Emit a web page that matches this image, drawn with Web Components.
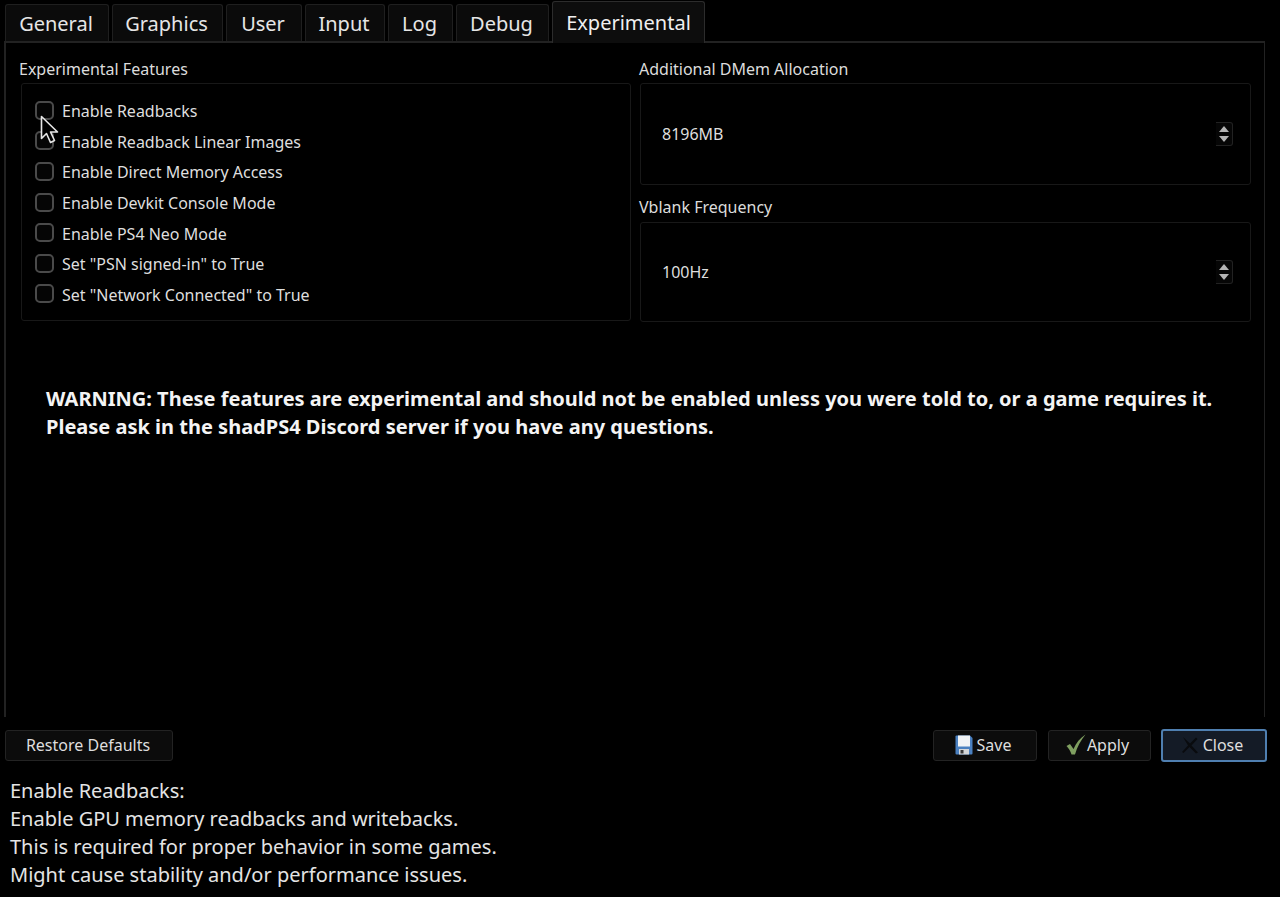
<!DOCTYPE html>
<html>
<head>
<meta charset="utf-8">
<style>
    html, body {
        margin: 0;
        height: 897px;
        overflow: hidden;
        background: #000;
    }
</style>
</head>
<body>
<settings-dialog>
    <tab-bar slot="tabs">
        <tab-item style="--w: 107px">General</tab-item>
        <tab-item style="--w: 114px">Graphics</tab-item>
        <tab-item style="--w: 79px">User</tab-item>
        <tab-item style="--w: 83px">Input</tab-item>
        <tab-item style="--w: 68px">Log</tab-item>
        <tab-item style="--w: 96px">Debug</tab-item>
        <tab-item active style="--w: 153px">Experimental</tab-item>
    </tab-bar>

    <group-box slot="left" title="Experimental Features" style="--inset: 2px">
        <check-list>
            <check-row>Enable Readbacks</check-row>
            <check-row>Enable Readback Linear Images</check-row>
            <check-row>Enable Direct Memory Access</check-row>
            <check-row>Enable Devkit Console Mode</check-row>
            <check-row>Enable PS4 Neo Mode</check-row>
            <check-row>Set "PSN signed-in" to True</check-row>
            <check-row>Set "Network Connected" to True</check-row>
        </check-list>
    </group-box>

    <group-box slot="right" title="Additional DMem Allocation" style="--inset: 1px">
        <spin-box style="--h: 100px">8196MB</spin-box>
    </group-box>
    <group-box slot="right" title="Vblank Frequency" style="--inset: 1px; --gap: 4px">
        <spin-box style="--h: 98px">100Hz</spin-box>
    </group-box>

    <span slot="warning">WARNING: These features are experimental and should not be enabled unless you were told to, or a game requires it.<br>Please ask in the shadPS4 Discord server if you have any questions.</span>

    <push-button slot="restore" style="--w: 168px; --pr: 2px">Restore Defaults</push-button>
    <push-button slot="actions" style="--w: 104px; --pr: 4px; margin-right: 1px">
        <svg slot="icon" width="18" height="20" viewBox="0 0 18 20">
            <path d="M0.5 1.5Q0.5 0.5 1.5 0.5H15L17.5 3V18.5Q17.5 19.5 16.5 19.5H1.5Q0.5 19.5 0.5 18.5z" fill="#4a80c0"/>
            <rect x="3" y="0.5" width="12" height="11" fill="#f0f3f6"/>
            <rect x="4" y="14" width="10" height="5.5" fill="#d4d6d8"/>
            <rect x="5.5" y="15" width="3" height="3.5" fill="#3a3a3a"/>
        </svg>
        Save
    </push-button>
    <push-button slot="actions" style="--w: 103px; --pr: 4px; --ig: -3px">
        <svg slot="icon" width="20" height="21" viewBox="0 0 20 21">
            <path d="M0.5 12L4 10L7.5 15C10 9 14 4 19.5 0.5C15 6 11 13 9 20.5H5.5C4.5 17 2.5 14 0.5 12z" fill="#7f9f60"/>
        </svg>
        Apply
    </push-button>
    <push-button slot="actions" focused style="--w: 106px; --pr: 4px">
        <svg slot="icon" width="18" height="18" viewBox="0 0 18 18">
            <path d="M2 1L9 7.5L15 1.5L16.5 3L10.5 9.5L17 16.5L15 17.5L8.5 11L2.5 17L1 16L7 9.5z" fill="#090b0e"/>
        </svg>
        Close
    </push-button>

    <span slot="help">Enable Readbacks:<br>Enable GPU memory readbacks and writebacks.<br>This is required for proper behavior in some games.<br>Might cause stability and/or performance issues.</span>
</settings-dialog>

<script>
const FONT = `"Noto Sans", "Open Sans", sans-serif`

customElements.define(
    'settings-dialog',
    class extends HTMLElement {
        constructor() {
            super()

            const shadow = this.attachShadow({ mode: 'open' })

            shadow.innerHTML = `
                <style>
                    :host {
                        display: flex;
                        flex-direction: column;
                        height: 897px;
                        box-sizing: border-box;
                        font-family: ${FONT};
                        color: #e8e8e8;
                        position: relative;
                    }
                    .tabs {
                        height: 41px;
                        padding-left: 5px;
                        display: flex;
                        position: relative;
                        z-index: 1;
                    }
                    .pane {
                        height: 676px;
                        box-sizing: border-box;
                        margin-left: 4px;
                        width: 1261px;
                        border: solid #222;
                        border-width: 2px 1px 0 2px;
                        padding: 15px 13px 0 13px;
                    }
                    .columns {
                        display: grid;
                        grid-template-columns: 612px 612px;
                        column-gap: 8px;
                        align-items: start;
                    }
                    .col {
                        display: flex;
                        flex-direction: column;
                        gap: 11px;
                    }
                    .warning {
                        margin: 63px 0 0 27px;
                        font-size: 20px;
                        font-weight: 700;
                        line-height: 28px;
                        color: #f4f4f4;
                        white-space: nowrap;
                    }
                    .buttons {
                        display: flex;
                        justify-content: space-between;
                        align-items: center;
                        margin-top: 12px;
                        padding: 0 13px 0 5px;
                        height: 33px;
                    }
                    .actions {
                        display: flex;
                        align-items: center;
                        gap: 10px;
                    }
                    .help {
                        margin: 15px 0 0 10px;
                        font-size: 20px;
                        line-height: 28px;
                        color: #e4e4e4;
                        white-space: nowrap;
                    }
                </style>
                <div class="tabs"><slot name="tabs"></slot></div>
                <div class="pane">
                    <div class="columns">
                        <div class="col"><slot name="left"></slot></div>
                        <div class="col"><slot name="right"></slot></div>
                    </div>
                    <div class="warning"><slot name="warning"></slot></div>
                </div>
                <div class="buttons">
                    <slot name="restore"></slot>
                    <div class="actions"><slot name="actions"></slot></div>
                </div>
                <div class="help"><slot name="help"></slot></div>
                <svg style="position: absolute; left: 40px; top: 115px" width="20" height="30" viewBox="0 0 20 30">
                    <path d="M1.5 1.5v22l5-5 4 9 4-2-4-8.5h7z" fill="#000" stroke="#e6e6e6" stroke-width="1.6" stroke-linejoin="round"/>
                </svg>
            `
        }
    }
)

customElements.define(
    'tab-bar',
    class extends HTMLElement {
        constructor() {
            super()

            const shadow = this.attachShadow({ mode: 'open' })

            shadow.innerHTML = `
                <style>
                    :host {
                        display: flex;
                        height: 41px;
                    }
                </style>
                <slot></slot>
            `
        }
    }
)

customElements.define(
    'tab-item',
    class extends HTMLElement {
        constructor() {
            super()

            const shadow = this.attachShadow({ mode: 'open' })

            shadow.innerHTML = `
                <style>
                    :host {
                        display: block;
                        box-sizing: border-box;
                        width: var(--w);
                        height: 41px;
                        padding-top: 4px;
                    }
                    .tab {
                        box-sizing: border-box;
                        height: 37px;
                        margin-right: 3px;
                        padding-right: 2px;
                        background: #0b0b0b;
                        border: 1px solid #1f1f1f;
                        border-bottom: 0;
                        border-radius: 3px 3px 0 0;
                        font-size: 20px;
                        line-height: 38px;
                        text-align: center;
                        color: #e6e6e6;
                    }
                    :host([active]) {
                        padding-top: 1px;
                        height: 43px;
                    }
                    :host([active]) .tab {
                        height: 42px;
                        line-height: 42px;
                        padding-right: 0;
                        background: #0d0d0d;
                        border-color: #2c2c2c;
                        color: #f0f0f0;
                        margin-right: 0;
                    }
                </style>
                <div class="tab"><slot></slot></div>
            `
        }
    }
)

customElements.define(
    'group-box',
    class extends HTMLElement {
        constructor() {
            super()

            const shadow = this.attachShadow({ mode: 'open' })

            shadow.innerHTML = `
                <style>
                    :host {
                        display: block;
                    }
                    .title {
                        font-size: 16px;
                        line-height: 22px;
                        color: #dcdcdc;
                        margin-bottom: var(--gap, 3px);
                    }
                    .box {
                        margin-left: var(--inset);
                        border: 1px solid #181818;
                        border-radius: 3px;
                    }
                </style>
                <div class="title"></div>
                <div class="box"><slot></slot></div>
            `
            shadow.querySelector('.title').textContent = this.getAttribute('title')
        }
    }
)

customElements.define(
    'check-list',
    class extends HTMLElement {
        constructor() {
            super()

            const shadow = this.attachShadow({ mode: 'open' })

            shadow.innerHTML = `
                <style>
                    :host {
                        display: flex;
                        flex-direction: column;
                        padding: 11px 0 11px 13px;
                    }
                </style>
                <slot></slot>
            `
        }
    }
)

customElements.define(
    'check-row',
    class extends HTMLElement {
        constructor() {
            super()

            const shadow = this.attachShadow({ mode: 'open' })

            shadow.innerHTML = `
                <style>
                    :host {
                        display: flex;
                        align-items: center;
                        gap: 8px;
                        height: 30.6px;
                        font-size: 16px;
                        color: #dedede;
                    }
                    .box {
                        box-sizing: border-box;
                        width: 19px;
                        height: 19px;
                        border: 2px solid #4a4a4a;
                        border-radius: 5px;
                        background: #050505;
                    }
                    .label {
                        margin-top: 2px;
                    }
                </style>
                <div class="box"></div>
                <span class="label"><slot></slot></span>
            `
        }
    }
)

customElements.define(
    'spin-box',
    class extends HTMLElement {
        constructor() {
            super()

            const shadow = this.attachShadow({ mode: 'open' })

            shadow.innerHTML = `
                <style>
                    :host {
                        display: flex;
                        align-items: center;
                        justify-content: space-between;
                        height: var(--h);
                        padding: 0 17px 0 21px;
                        font-size: 16px;
                        color: #dedede;
                    }
                    .arrows {
                        box-sizing: border-box;
                        width: 17px;
                        height: 24px;
                        display: flex;
                        flex-direction: column;
                        align-items: center;
                        justify-content: center;
                        gap: 4px;
                        background: #060606;
                        border: 1px solid #222;
                        border-left: 0;
                        border-radius: 0 3px 3px 0;
                    }
                    .up, .down {
                        width: 0;
                        height: 0;
                        border-left: 5.5px solid transparent;
                        border-right: 5.5px solid transparent;
                    }
                    .up { border-bottom: 6px solid #b4b4b4; }
                    .down { border-top: 6px solid #b4b4b4; }
                </style>
                <span><slot></slot></span>
                <div class="arrows"><div class="up"></div><div class="down"></div></div>
            `
        }
    }
)

customElements.define(
    'push-button',
    class extends HTMLElement {
        constructor() {
            super()

            const shadow = this.attachShadow({ mode: 'open' })

            shadow.innerHTML = `
                <style>
                    :host {
                        display: flex;
                        align-items: center;
                        justify-content: center;
                        gap: 4px;
                        box-sizing: border-box;
                        width: var(--w);
                        height: 31px;
                        padding: 0 var(--pr, 0) 2px 0;
                        background: #0c0c0c;
                        border: 1px solid #232323;
                        border-radius: 3px;
                        font-size: 16px;
                        color: #dedede;
                    }
                    :host([focused]) {
                        height: 33px;
                        background: #141b26;
                        border: 2px solid #4f7fb0;
                    }
                    slot[name=icon]::slotted(*) {
                        flex: none;
                        margin-right: var(--ig, 0);
                    }
                </style>
                <slot name="icon"></slot>
                <slot></slot>
            `
        }
    }
)
</script>
</body>
</html>
